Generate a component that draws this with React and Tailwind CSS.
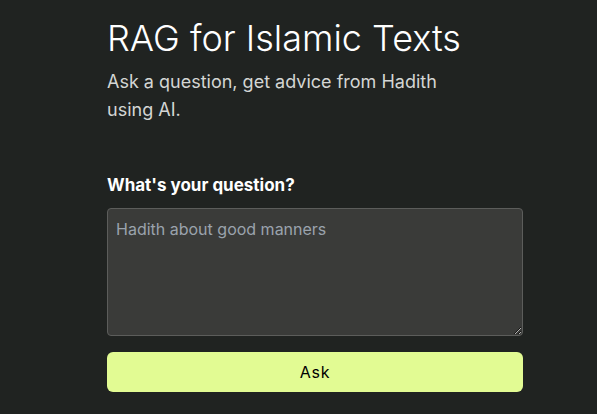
export default function App() {
  return (
    <div
      className="min-h-screen w-full bg-[#202321] text-white"
      style={{ fontFamily: "Inter, 'Noto Sans', sans-serif" }}
    >
      <div className="ml-[107px] w-[416px] pt-[18px]">
        {/* Header */}
        <h1 className="text-4xl font-light text-white">RAG for Islamic Texts</h1>
        <p className="mt-[10px] max-w-[360px] text-lg text-[#d4d6d4]">
          Ask a question, get advice from Hadith using AI.
        </p>

        {/* Form */}
        <label className="mt-[49px] block text-[17px] font-bold text-white" htmlFor="q">
          What's your question?
        </label>
        <textarea
          id="q"
          placeholder="Hadith about good manners"
          className="mt-[9px] block h-[128px] w-full rounded border border-[#5c5d5b] bg-[#3a3b39] p-2 text-base text-white placeholder:text-[#9aa3ad] outline-none"
        />
        <button className="mt-[16px] block h-10 w-full rounded-md bg-[#e2fb93] text-base font-normal tracking-wider text-black">
          Ask
        </button>
      </div>
    </div>
  );
}
